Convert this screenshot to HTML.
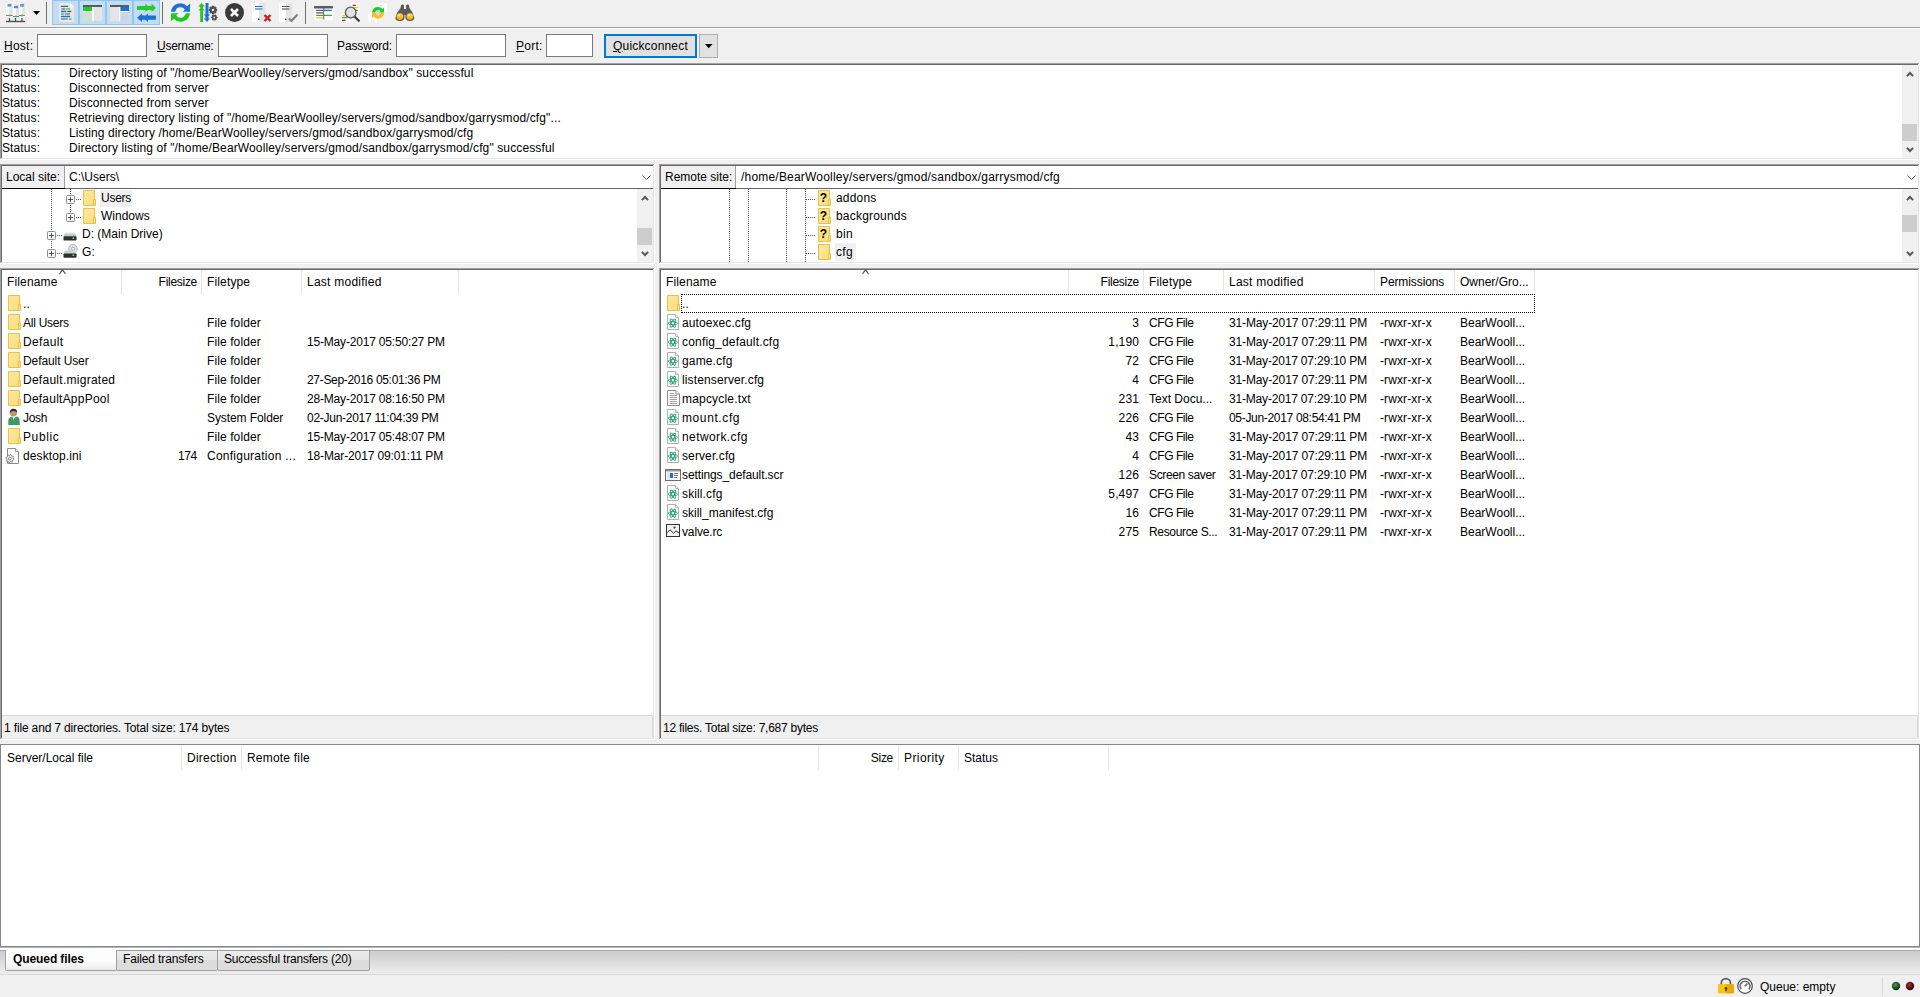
<!DOCTYPE html><html><head><meta charset="utf-8"><style>
html,body{margin:0;padding:0;width:1920px;height:997px;overflow:hidden;background:#f0f0f0;}
body{position:relative;font-family:"Liberation Sans",sans-serif;font-size:12px;color:#000;}
div{box-sizing:border-box;}
.t{position:absolute;white-space:nowrap;line-height:16px;height:16px;letter-spacing:0.12px;}
.d{letter-spacing:-0.25px;}
svg{position:absolute;overflow:visible;}
</style></head><body>
<div style="position:absolute;left:0px;top:27px;width:1920px;height:1px;background:#a0a0a0;"></div>
<div style="position:absolute;left:0px;top:28px;width:1920px;height:1px;background:#fff;"></div>
<div style="position:absolute;left:52px;top:0px;width:27px;height:25px;background:#c4dcf2;border:1px solid #8ec6f4;"></div>
<div style="position:absolute;left:79px;top:0px;width:27px;height:25px;background:#c4dcf2;border:1px solid #8ec6f4;"></div>
<div style="position:absolute;left:106px;top:0px;width:27px;height:25px;background:#c4dcf2;border:1px solid #8ec6f4;"></div>
<div style="position:absolute;left:133px;top:0px;width:27px;height:25px;background:#c4dcf2;border:1px solid #8ec6f4;"></div>
<div style="position:absolute;left:46px;top:2px;width:1px;height:22px;background:#6d6d6d;"></div>
<div style="position:absolute;left:162px;top:2px;width:1px;height:22px;background:#6d6d6d;"></div>
<div style="position:absolute;left:305px;top:2px;width:1px;height:22px;background:#6d6d6d;"></div>
<svg style="left:0;top:0" width="420" height="27" viewBox="0 0 420 27"><defs>
<linearGradient id="srvg" x1="0" x2="1"><stop offset="0" stop-color="#fff"/><stop offset="0.5" stop-color="#fafafa"/><stop offset="0.52" stop-color="#e6e6e6"/><stop offset="1" stop-color="#e0e0e0"/></linearGradient>
<linearGradient id="lensg" x1="0" y1="0" x2="0" y2="1"><stop offset="0" stop-color="#ffd23a"/><stop offset="1" stop-color="#f0b000"/></linearGradient>
</defs><rect x="6" y="3" width="6" height="12" fill="url(#srvg)"/><rect x="13" y="5" width="6" height="11" fill="url(#srvg)"/><rect x="19" y="3" width="6" height="12" fill="url(#srvg)"/><rect x="7.5" y="4" width="4" height="2.6" fill="#5b9be0"/><rect x="14" y="5.8" width="4" height="2.4" fill="#4a8ad8"/><rect x="20" y="4" width="4" height="2.6" fill="#5b9be0"/><path d="M6 15.5H12.5M13 16.5H19M19 15.5H25" stroke="#808080" stroke-width="1"/><rect x="8.7" y="14.7" width="1.8" height="1.6" fill="#2ecc40"/><rect x="14.9" y="15.7" width="2" height="1.6" fill="#2ecc40"/><rect x="21" y="14.7" width="2" height="1.6" fill="#2ecc40"/><path d="M9.5 18V21.5M15.5 18V21.5M22 18V21.5" stroke="#505050" stroke-width="1.3"/><path d="M6 21.5H25" stroke="#505050" stroke-width="1.4"/><path d="M33 11H40L36.5 15Z" fill="#000"/><path d="M59 3H70L74 7V22H59Z" fill="#e8e8e8"/><path d="M70 3L74 7H70Z" fill="#fff"/><g stroke-width="1.3" stroke-linecap="round"><path d="M61.5 6.4H67.5" stroke="#555"/><path d="M61.8 9H64.8" stroke="#4a8ad8"/><path d="M66.5 9H69.5" stroke="#4ccc50"/><path d="M61.5 11.5H65.8" stroke="#1a73d4"/><path d="M67.8 11.5H70.8" stroke="#555"/><path d="M61.5 14H63.6" stroke="#4ccc50"/><path d="M65.5 14H69.5" stroke="#888"/><path d="M61.5 16.5H69.8" stroke="#1a73d4"/><path d="M61.5 19H67.3" stroke="#888"/><path d="M69.2 19H71.2" stroke="#4ccc50"/></g><rect x="83" y="5" width="19" height="2" fill="#5a5a5a"/><rect x="83" y="7" width="9" height="4" fill="#22cc22"/><rect x="83" y="11" width="9" height="1" fill="#fff"/><rect x="83" y="12" width="9" height="9" fill="#cfe3c9"/><rect x="92" y="7" width="2" height="14" fill="#f8f8f8"/><rect x="94" y="7" width="8" height="14" fill="#e4e4e4"/><rect x="110" y="5" width="19" height="2" fill="#5a5a5a"/><rect x="110" y="7" width="9" height="14" fill="#e4e4e4"/><rect x="119" y="7" width="1.5" height="14" fill="#f8f8f8"/><rect x="120.5" y="7" width="8.5" height="4" fill="#1a73d4"/><rect x="120.5" y="11" width="8.5" height="1" fill="#fff"/><rect x="120.5" y="12" width="8.5" height="9" fill="#c8d8e6"/><path d="M137 6H145.5V3.5L150 8L145.5 12V10H137Z" fill="#22cc22"/><path d="M150 6H151.5V3.5L156 8L151.5 12V10H150Z" fill="#22cc22"/><rect x="146" y="6" width="5" height="4" fill="#22cc22"/><path d="M156 15.5H148V13.5L143 17.8L148 22V19.7H156Z" fill="#1a73d4"/><path d="M143.5 15.5H142V13.5L137 17.8L142 22V19.7H143.5Z" fill="#1a73d4"/><rect x="142" y="15.5" width="6" height="4.2" fill="#1a73d4"/><g transform="translate(171,3)"><path d="M0,8.7 A9.4,9.4 0 0 1 16.2,3.2 L19,0.5 V8.7 H11.8 L13.8,6.6 A5.2,5.2 0 0 0 4.3,8.7 Z" fill="#1a73d4"/><path d="M19,10.3 A9.4,9.4 0 0 1 2.8,15.8 L0,18.5 V10.3 H7.2 L5.2,12.4 A5.2,5.2 0 0 0 14.7,10.3 Z" fill="#22c822"/></g><path d="M200.2 22V10.5L198.2 10.5L200.2 8.5V6.5L198.2 6.5L201.6 3L205 6.5L203 6.5V8.5L205 10.5L203 10.5V22Z" fill="#22c822"/><path d="M205.5 3H208.5V14.5L210 14.5L208.5 16.5V18.5L210 18.5L207 22L203.8 18.5L205.5 18.5V16.5L203.8 14.5L205.5 14.5Z" fill="#1a73d4"/><polygon points="217.20,10.00 215.77,11.15 215.97,12.97 214.15,12.77 213.00,14.20 211.85,12.77 210.03,12.97 210.23,11.15 208.80,10.00 210.23,8.85 210.03,7.03 211.85,7.23 213.00,5.80 214.15,7.23 215.97,7.03 215.77,8.85" fill="#4a4a4a" stroke="#4a4a4a" stroke-width="1" stroke-linejoin="round"/><circle cx="213" cy="10" r="1.2" fill="#f0f0f0"/><polygon points="217.30,17.50 216.21,18.60 215.80,20.10 214.30,19.70 212.80,20.10 212.39,18.60 211.30,17.50 212.39,16.40 212.80,14.90 214.30,15.30 215.80,14.90 216.21,16.40" fill="#4a4a4a" stroke="#4a4a4a" stroke-width="1" stroke-linejoin="round"/><circle cx="214.3" cy="17.5" r="0.9" fill="#f0f0f0"/><circle cx="234.5" cy="12.5" r="9.5" fill="#3a3a3a"/><path d="M231 9L238 16M238 9L231 16" stroke="#fff" stroke-width="2.6"/><rect x="252" y="3" width="7" height="19" fill="#fff"/><rect x="259" y="3" width="6.5" height="19" fill="#e4e4e4"/><path d="M255 6.5H262.5" stroke="#1a73d4" stroke-width="1"/><path d="M255 9H262.5" stroke="#5b9be0" stroke-width="1.6"/><rect x="258" y="18.5" width="1.4" height="1.4" fill="#333"/><path d="M264.5 15L270.5 21M270.5 15L264.5 21" stroke="#c81e1e" stroke-width="2.4"/><rect x="279" y="3" width="7" height="19" fill="#fff"/><rect x="286" y="3" width="6.5" height="19" fill="#e4e4e4"/><path d="M282 6.5H289.5" stroke="#555" stroke-width="1"/><path d="M282 9H289.5" stroke="#888" stroke-width="1.6"/><rect x="285" y="18.5" width="1.4" height="1.4" fill="#333"/><path d="M289 18.5L291.5 21L297.5 14.5" stroke="#808080" stroke-width="2.2" fill="none"/><rect x="314" y="8.5" width="19" height="11.5" fill="#fff"/><rect x="314" y="6" width="19" height="2.5" fill="#5a5a5a" rx="0.8"/><g stroke-width="1.3" stroke-linecap="round"><path d="M316.5 10.3H331.5" stroke="#1a73d4"/><path d="M316.5 12.8H322.8" stroke="#c83232"/><path d="M316.5 15.3H331.5" stroke="#22b822"/><path d="M316.5 17.8H322.8" stroke="#ffc21a"/></g><path d="M323.7 8V19.5" stroke="#666" stroke-width="1"/><rect x="351.5" y="3" width="8" height="9" fill="#fff"/><rect x="341" y="14" width="9" height="8" fill="#fff"/><g stroke-width="1.3" stroke-linecap="round"><path d="M353 5.3H355.5" stroke="#c81e1e"/><path d="M353.5 7.6H358" stroke="#ffc21a"/><path d="M355 10.3H357.5" stroke="#22b822"/><path d="M342.5 15.3H344.5" stroke="#ffc21a"/><path d="M342.5 17.6H347" stroke="#22b822"/><path d="M342.5 20.4H345" stroke="#c81e1e"/></g><path d="M354.5 16.5L358.8 20.8" stroke="#3a3a3a" stroke-width="2.3" stroke-linecap="round"/><circle cx="350.7" cy="12.5" r="5.3" fill="#e2e2e2" stroke="#5a5a5a" stroke-width="1.3"/><rect x="378.5" y="3" width="8.5" height="9" fill="#fff"/><rect x="368" y="13.5" width="9" height="8.5" fill="#fff"/><path d="M379.5 5.5H382" stroke="#ccc" stroke-width="0.8"/><path d="M371 21H374" stroke="#ccc" stroke-width="0.8"/><circle cx="378" cy="12.8" r="4" fill="#d8d8d8"/><g transform="translate(372,6.7)"><path d="M0,5.8 A6,6 0 0 1 10.5,2.3 L12,0.8 V5.8 H7.2 L8.5,4.5 A3.2,3.2 0 0 0 3,5.8 Z" fill="#22c822"/><path d="M12,6.4 A6,6 0 0 1 1.5,9.9 L0,11.4 V6.4 H4.8 L3.5,7.7 A3.2,3.2 0 0 0 9,6.4 Z" fill="#ffbf10"/></g><path d="M401 5Q402.5 4 404 5V9H406V5Q407.5 4 409 5L409.5 8L412.5 12.5L414.2 17.5Q414.5 21 409.8 21Q406 21 405.5 18V15H404.5V18Q404 21 400 21Q395.2 21 395.5 17.5L397.2 12.5L400.5 8Z" fill="#5c5c5c"/><circle cx="399.9" cy="16.6" r="3.3" fill="url(#lensg)"/><circle cx="409.9" cy="16.6" r="3.3" fill="url(#lensg)"/><path d="M398.4 16.2Q398.6 14.9 399.9 14.7M408.4 16.2Q408.6 14.9 409.9 14.7" stroke="#fff" stroke-width="0.8" fill="none"/></svg>
<div class="t" style="left:4px;top:38px;letter-spacing:0.250px;"><u>H</u>ost:</div>
<div style="position:absolute;left:37px;top:34px;width:110px;height:23px;background:#fff;border:1px solid #7a7a7a;"></div>
<div class="t" style="left:157px;top:38px;letter-spacing:-0.250px;"><u>U</u>sername:</div>
<div style="position:absolute;left:218px;top:34px;width:110px;height:23px;background:#fff;border:1px solid #7a7a7a;"></div>
<div class="t" style="left:337px;top:38px;letter-spacing:-0.125px;">Pass<u>w</u>ord:</div>
<div style="position:absolute;left:396px;top:34px;width:110px;height:23px;background:#fff;border:1px solid #7a7a7a;"></div>
<div class="t" style="left:516px;top:38px;letter-spacing:0.250px;"><u>P</u>ort:</div>
<div style="position:absolute;left:546px;top:34px;width:47px;height:23px;background:#fff;border:1px solid #7a7a7a;"></div>
<div style="position:absolute;left:604px;top:34px;width:93px;height:24px;background:#e1e1e1;border:2px solid #0078d7;"></div>
<div class="t" style="left:613px;top:38px;letter-spacing:0.182px;"><u>Q</u>uickconnect</div>
<div style="position:absolute;left:699px;top:34px;width:19px;height:24px;background:#e1e1e1;border:1px solid #adadad;"></div>
<svg style="left:705px;top:44px" width="8" height="5"><path d="M0 0H7.5L3.75 4.2z" fill="#000"/></svg>
<div style="position:absolute;left:0px;top:63px;width:1920px;height:97px;background:#fff;"></div><div style="position:absolute;left:0px;top:63px;width:1919px;height:96px;background:#a0a0a0;"></div><div style="position:absolute;left:1px;top:64px;width:1918px;height:95px;background:#e3e3e3;"></div><div style="position:absolute;left:1px;top:64px;width:1917px;height:94px;background:#696969;"></div><div style="position:absolute;left:2px;top:65px;width:1916px;height:93px;background:#fff;"></div>
<div class="t" style="left:2px;top:65px;">Status:</div>
<div class="t" style="left:69px;top:65px;">Directory listing of &quot;/home/BearWoolley/servers/gmod/sandbox&quot; successful</div>
<div class="t" style="left:2px;top:80px;">Status:</div>
<div class="t" style="left:69px;top:80px;">Disconnected from server</div>
<div class="t" style="left:2px;top:95px;">Status:</div>
<div class="t" style="left:69px;top:95px;">Disconnected from server</div>
<div class="t" style="left:2px;top:110px;">Status:</div>
<div class="t" style="left:69px;top:110px;">Retrieving directory listing of &quot;/home/BearWoolley/servers/gmod/sandbox/garrysmod/cfg&quot;...</div>
<div class="t" style="left:2px;top:125px;">Status:</div>
<div class="t" style="left:69px;top:125px;">Listing directory /home/BearWoolley/servers/gmod/sandbox/garrysmod/cfg</div>
<div class="t" style="left:2px;top:140px;">Status:</div>
<div class="t" style="left:69px;top:140px;">Directory listing of &quot;/home/BearWoolley/servers/gmod/sandbox/garrysmod/cfg&quot; successful</div>
<div style="position:absolute;left:1902px;top:65px;width:16px;height:93px;background:#f0f0f0;"></div><svg style="left:1906px;top:71px" width="8" height="6"><path d="M0.9 5.1L4 2L7.1 5.1" stroke="#555" stroke-width="2" fill="none"/></svg><svg style="left:1906px;top:147px" width="8" height="6"><path d="M0.9 0.9L4 4L7.1 0.9" stroke="#555" stroke-width="2" fill="none"/></svg><div style="position:absolute;left:1902px;top:124px;width:15px;height:17px;background:#cdcdcd;"></div>
<div style="position:absolute;left:0px;top:164px;width:655px;height:100px;background:#fff;"></div><div style="position:absolute;left:0px;top:164px;width:654px;height:99px;background:#a0a0a0;"></div><div style="position:absolute;left:1px;top:165px;width:653px;height:98px;background:#e3e3e3;"></div><div style="position:absolute;left:1px;top:165px;width:652px;height:97px;background:#696969;"></div><div style="position:absolute;left:2px;top:166px;width:651px;height:96px;background:#fff;"></div>
<div style="position:absolute;left:659px;top:164px;width:1261px;height:100px;background:#fff;"></div><div style="position:absolute;left:659px;top:164px;width:1260px;height:99px;background:#a0a0a0;"></div><div style="position:absolute;left:660px;top:165px;width:1259px;height:98px;background:#e3e3e3;"></div><div style="position:absolute;left:660px;top:165px;width:1258px;height:97px;background:#696969;"></div><div style="position:absolute;left:661px;top:166px;width:1257px;height:96px;background:#fff;"></div>
<div style="position:absolute;left:2px;top:166px;width:63px;height:22px;background:#f0f0f0;border-right:1px solid #a0a0a0;"></div><div style="position:absolute;left:2px;top:188px;width:651px;height:1px;background:#646464;"></div><div style="position:absolute;left:2px;top:188px;width:63px;height:1px;background:#000;"></div><div class="t" style="left:6px;top:169px;letter-spacing:0.000px;">Local site:</div><div class="t" style="left:69px;top:169px;letter-spacing:0.000px;">C:\Users\</div><svg style="left:642px;top:175px" width="9" height="6"><path d="M0.5 0.5L4.5 4.5L8.5 0.5" stroke="#606060" stroke-width="1" fill="none"/></svg>
<div style="position:absolute;left:661px;top:166px;width:75px;height:22px;background:#f0f0f0;border-right:1px solid #a0a0a0;"></div><div style="position:absolute;left:661px;top:188px;width:1257px;height:1px;background:#646464;"></div><div style="position:absolute;left:661px;top:188px;width:75px;height:1px;background:#000;"></div><div class="t" style="left:665px;top:169px;letter-spacing:0.000px;">Remote site:</div><div class="t" style="left:741px;top:169px;letter-spacing:0.200px;">/home/BearWoolley/servers/gmod/sandbox/garrysmod/cfg</div><svg style="left:1907px;top:175px" width="9" height="6"><path d="M0.5 0.5L4.5 4.5L8.5 0.5" stroke="#606060" stroke-width="1" fill="none"/></svg>
<div style="position:absolute;left:637px;top:189px;width:16px;height:73px;background:#f0f0f0;"></div><svg style="left:641px;top:195px" width="8" height="6"><path d="M0.9 5.1L4 2L7.1 5.1" stroke="#555" stroke-width="2" fill="none"/></svg><svg style="left:641px;top:251px" width="8" height="6"><path d="M0.9 0.9L4 4L7.1 0.9" stroke="#555" stroke-width="2" fill="none"/></svg><div style="position:absolute;left:637px;top:228px;width:15px;height:17px;background:#cdcdcd;"></div>
<div style="position:absolute;left:1902px;top:189px;width:16px;height:73px;background:#f0f0f0;"></div><svg style="left:1906px;top:195px" width="8" height="6"><path d="M0.9 5.1L4 2L7.1 5.1" stroke="#555" stroke-width="2" fill="none"/></svg><svg style="left:1906px;top:251px" width="8" height="6"><path d="M0.9 0.9L4 4L7.1 0.9" stroke="#555" stroke-width="2" fill="none"/></svg><div style="position:absolute;left:1902px;top:215px;width:15px;height:17px;background:#cdcdcd;"></div>
<div style="position:absolute;left:51px;top:189px;width:1px;height:60px;background:repeating-linear-gradient(to bottom,#5a5a5a 0,#5a5a5a 1px,transparent 1px,transparent 2px);"></div>
<div style="position:absolute;left:70px;top:189px;width:1px;height:24px;background:repeating-linear-gradient(to bottom,#5a5a5a 0,#5a5a5a 1px,transparent 1px,transparent 2px);"></div>
<div style="position:absolute;left:66px;top:195px;width:9px;height:9px;background:linear-gradient(to bottom,#fff 0,#fff 55%,#ececec 100%);border:1px solid #8e8e8e;border-radius:1.5px;"></div><div style="position:absolute;left:68px;top:199px;width:5px;height:1px;background:#3c4e86;"></div><div style="position:absolute;left:70px;top:197px;width:1px;height:5px;background:#3c4e86;"></div>
<div style="position:absolute;left:76px;top:199px;width:6px;height:1px;background:repeating-linear-gradient(to right,#5a5a5a 0,#5a5a5a 1px,transparent 1px,transparent 2px);"></div>
<svg style="left:83px;top:190px" width="13" height="16" viewBox="0 0 13 16"><defs><linearGradient id="fg" x1="0" y1="0" x2="1" y2="1"><stop offset="0" stop-color="#fee9a0"/><stop offset="1" stop-color="#fbdc7a"/></linearGradient></defs><path d="M0.5 0.5H11.5V15.5H0.5Z" fill="url(#fg)" stroke="#e8c04a"/><path d="M10.5 9.5H12.5V15.5H10.5Z" fill="#fbe08a" stroke="#e8c04a"/></svg>
<div style="position:absolute;left:100px;top:190px;width:32px;height:17px;background:#f0f0f0;"></div>
<div class="t" style="left:101px;top:190px;letter-spacing:-0.250px;">Users</div>
<div style="position:absolute;left:66px;top:213px;width:9px;height:9px;background:linear-gradient(to bottom,#fff 0,#fff 55%,#ececec 100%);border:1px solid #8e8e8e;border-radius:1.5px;"></div><div style="position:absolute;left:68px;top:217px;width:5px;height:1px;background:#3c4e86;"></div><div style="position:absolute;left:70px;top:215px;width:1px;height:5px;background:#3c4e86;"></div>
<div style="position:absolute;left:76px;top:217px;width:6px;height:1px;background:repeating-linear-gradient(to right,#5a5a5a 0,#5a5a5a 1px,transparent 1px,transparent 2px);"></div>
<svg style="left:83px;top:208px" width="13" height="16" viewBox="0 0 13 16"><defs><linearGradient id="fg" x1="0" y1="0" x2="1" y2="1"><stop offset="0" stop-color="#fee9a0"/><stop offset="1" stop-color="#fbdc7a"/></linearGradient></defs><path d="M0.5 0.5H11.5V15.5H0.5Z" fill="url(#fg)" stroke="#e8c04a"/><path d="M10.5 9.5H12.5V15.5H10.5Z" fill="#fbe08a" stroke="#e8c04a"/></svg>
<div class="t" style="left:101px;top:208px;letter-spacing:0.000px;">Windows</div>
<div style="position:absolute;left:47px;top:231px;width:9px;height:9px;background:linear-gradient(to bottom,#fff 0,#fff 55%,#ececec 100%);border:1px solid #8e8e8e;border-radius:1.5px;"></div><div style="position:absolute;left:49px;top:235px;width:5px;height:1px;background:#3c4e86;"></div><div style="position:absolute;left:51px;top:233px;width:1px;height:5px;background:#3c4e86;"></div>
<div style="position:absolute;left:57px;top:235px;width:6px;height:1px;background:repeating-linear-gradient(to right,#5a5a5a 0,#5a5a5a 1px,transparent 1px,transparent 2px);"></div>
<svg style="left:63px;top:232px" width="14" height="9"><defs><linearGradient id="drg" x1="0" y1="0" x2="0" y2="1"><stop offset="0" stop-color="#e4e6e8"/><stop offset="1" stop-color="#b8bcc0"/></linearGradient></defs><path d="M2 0.5H12L13.5 4.3H0.5Z" fill="url(#drg)"/><rect x="0.5" y="4.3" width="13" height="4.2" rx="0.8" fill="#2e2e2e"/><circle cx="10.3" cy="6.2" r="0.9" fill="#3f3"/></svg>
<div class="t" style="left:82px;top:226px;letter-spacing:0.000px;">D: (Main Drive)</div>
<div style="position:absolute;left:47px;top:249px;width:9px;height:9px;background:linear-gradient(to bottom,#fff 0,#fff 55%,#ececec 100%);border:1px solid #8e8e8e;border-radius:1.5px;"></div><div style="position:absolute;left:49px;top:253px;width:5px;height:1px;background:#3c4e86;"></div><div style="position:absolute;left:51px;top:251px;width:1px;height:5px;background:#3c4e86;"></div>
<div style="position:absolute;left:57px;top:253px;width:6px;height:1px;background:repeating-linear-gradient(to right,#5a5a5a 0,#5a5a5a 1px,transparent 1px,transparent 2px);"></div>
<svg style="left:63px;top:244px" width="14" height="14"><circle cx="10" cy="4.7" r="4.3" fill="#dfe3e6" stroke="#a0a4a8" stroke-width="0.8"/><circle cx="10" cy="4.7" r="1.5" fill="#fff" stroke="#999" stroke-width="0.8"/><path d="M2 6.5H8.5L13.5 10H0.5Z" fill="#c8ccd0"/><rect x="0.5" y="9.5" width="13" height="4.2" rx="0.8" fill="#2e2e2e"/><circle cx="10.3" cy="11.2" r="0.9" fill="#3f3"/></svg>
<div class="t" style="left:82px;top:244px;">G:</div>
<div style="position:absolute;left:729px;top:189px;width:1px;height:73px;background:repeating-linear-gradient(to bottom,#5a5a5a 0,#5a5a5a 1px,transparent 1px,transparent 2px);"></div>
<div style="position:absolute;left:748px;top:189px;width:1px;height:73px;background:repeating-linear-gradient(to bottom,#5a5a5a 0,#5a5a5a 1px,transparent 1px,transparent 2px);"></div>
<div style="position:absolute;left:786px;top:189px;width:1px;height:73px;background:repeating-linear-gradient(to bottom,#5a5a5a 0,#5a5a5a 1px,transparent 1px,transparent 2px);"></div>
<div style="position:absolute;left:805px;top:189px;width:1px;height:73px;background:repeating-linear-gradient(to bottom,#5a5a5a 0,#5a5a5a 1px,transparent 1px,transparent 2px);"></div>
<div style="position:absolute;left:806px;top:199px;width:10px;height:1px;background:repeating-linear-gradient(to right,#5a5a5a 0,#5a5a5a 1px,transparent 1px,transparent 2px);"></div>
<svg style="left:818px;top:190px" width="13" height="16" viewBox="0 0 13 16"><defs><linearGradient id="fg" x1="0" y1="0" x2="1" y2="1"><stop offset="0" stop-color="#fee9a0"/><stop offset="1" stop-color="#fbdc7a"/></linearGradient></defs><path d="M0.5 0.5H11.5V15.5H0.5Z" fill="url(#fg)" stroke="#e8c04a"/><path d="M10.5 9.5H12.5V15.5H10.5Z" fill="#fbe08a" stroke="#e8c04a"/><text x="5.5" y="12" font-family="Liberation Sans" font-weight="bold" font-size="12" text-anchor="middle" fill="#000">?</text></svg>
<div class="t" style="left:836px;top:190px;letter-spacing:0.200px;">addons</div>
<div style="position:absolute;left:806px;top:217px;width:10px;height:1px;background:repeating-linear-gradient(to right,#5a5a5a 0,#5a5a5a 1px,transparent 1px,transparent 2px);"></div>
<svg style="left:818px;top:208px" width="13" height="16" viewBox="0 0 13 16"><defs><linearGradient id="fg" x1="0" y1="0" x2="1" y2="1"><stop offset="0" stop-color="#fee9a0"/><stop offset="1" stop-color="#fbdc7a"/></linearGradient></defs><path d="M0.5 0.5H11.5V15.5H0.5Z" fill="url(#fg)" stroke="#e8c04a"/><path d="M10.5 9.5H12.5V15.5H10.5Z" fill="#fbe08a" stroke="#e8c04a"/><text x="5.5" y="12" font-family="Liberation Sans" font-weight="bold" font-size="12" text-anchor="middle" fill="#000">?</text></svg>
<div class="t" style="left:836px;top:208px;letter-spacing:0.200px;">backgrounds</div>
<div style="position:absolute;left:806px;top:235px;width:10px;height:1px;background:repeating-linear-gradient(to right,#5a5a5a 0,#5a5a5a 1px,transparent 1px,transparent 2px);"></div>
<svg style="left:818px;top:226px" width="13" height="16" viewBox="0 0 13 16"><defs><linearGradient id="fg" x1="0" y1="0" x2="1" y2="1"><stop offset="0" stop-color="#fee9a0"/><stop offset="1" stop-color="#fbdc7a"/></linearGradient></defs><path d="M0.5 0.5H11.5V15.5H0.5Z" fill="url(#fg)" stroke="#e8c04a"/><path d="M10.5 9.5H12.5V15.5H10.5Z" fill="#fbe08a" stroke="#e8c04a"/><text x="5.5" y="12" font-family="Liberation Sans" font-weight="bold" font-size="12" text-anchor="middle" fill="#000">?</text></svg>
<div class="t" style="left:836px;top:226px;letter-spacing:0.300px;">bin</div>
<div style="position:absolute;left:806px;top:253px;width:10px;height:1px;background:repeating-linear-gradient(to right,#5a5a5a 0,#5a5a5a 1px,transparent 1px,transparent 2px);"></div>
<svg style="left:818px;top:244px" width="13" height="16" viewBox="0 0 13 16"><defs><linearGradient id="fg" x1="0" y1="0" x2="1" y2="1"><stop offset="0" stop-color="#fee9a0"/><stop offset="1" stop-color="#fbdc7a"/></linearGradient></defs><path d="M0.5 0.5H11.5V15.5H0.5Z" fill="url(#fg)" stroke="#e8c04a"/><path d="M10.5 9.5H12.5V15.5H10.5Z" fill="#fbe08a" stroke="#e8c04a"/></svg>
<div style="position:absolute;left:835px;top:243px;width:21px;height:18px;background:#f0f0f0;"></div>
<div class="t" style="left:836px;top:244px;letter-spacing:0.300px;">cfg</div>
<div style="position:absolute;left:0px;top:268px;width:655px;height:472px;background:#fff;"></div><div style="position:absolute;left:0px;top:268px;width:654px;height:471px;background:#a0a0a0;"></div><div style="position:absolute;left:1px;top:269px;width:653px;height:470px;background:#e3e3e3;"></div><div style="position:absolute;left:1px;top:269px;width:652px;height:469px;background:#696969;"></div><div style="position:absolute;left:2px;top:270px;width:651px;height:468px;background:#fff;"></div>
<div style="position:absolute;left:659px;top:268px;width:1261px;height:472px;background:#fff;"></div><div style="position:absolute;left:659px;top:268px;width:1260px;height:471px;background:#a0a0a0;"></div><div style="position:absolute;left:660px;top:269px;width:1259px;height:470px;background:#e3e3e3;"></div><div style="position:absolute;left:660px;top:269px;width:1258px;height:469px;background:#696969;"></div><div style="position:absolute;left:661px;top:270px;width:1257px;height:468px;background:#fff;"></div>
<div style="position:absolute;left:121px;top:270px;width:1px;height:24px;background:#e5e5e5;"></div>
<div style="position:absolute;left:201px;top:270px;width:1px;height:24px;background:#e5e5e5;"></div>
<div style="position:absolute;left:301px;top:270px;width:1px;height:24px;background:#e5e5e5;"></div>
<div style="position:absolute;left:458px;top:270px;width:1px;height:24px;background:#e5e5e5;"></div>
<svg style="left:58px;top:269px" width="9" height="7"><path d="M1.5 4.8L4.5 0.9L7.5 4.8" stroke="#606060" stroke-width="1.3" fill="none"/></svg>
<div class="t" style="left:7px;top:274px;letter-spacing:0.143px;">Filename</div>
<div class="t" style="right:1723px;top:274px;letter-spacing:-0.286px;">Filesize</div>
<div class="t" style="left:207px;top:274px;letter-spacing:0.143px;">Filetype</div>
<div class="t" style="left:307px;top:274px;letter-spacing:0.250px;">Last modified</div>
<svg style="left:8px;top:295px" width="13" height="16" viewBox="0 0 13 16"><defs><linearGradient id="fg" x1="0" y1="0" x2="1" y2="1"><stop offset="0" stop-color="#fee9a0"/><stop offset="1" stop-color="#fbdc7a"/></linearGradient></defs><path d="M0.5 0.5H11.5V15.5H0.5Z" fill="url(#fg)" stroke="#e8c04a"/><path d="M10.5 9.5H12.5V15.5H10.5Z" fill="#fbe08a" stroke="#e8c04a"/></svg>
<div class="t" style="left:23px;top:296px;">..</div>
<svg style="left:8px;top:314px" width="13" height="16" viewBox="0 0 13 16"><defs><linearGradient id="fg" x1="0" y1="0" x2="1" y2="1"><stop offset="0" stop-color="#fee9a0"/><stop offset="1" stop-color="#fbdc7a"/></linearGradient></defs><path d="M0.5 0.5H11.5V15.5H0.5Z" fill="url(#fg)" stroke="#e8c04a"/><path d="M10.5 9.5H12.5V15.5H10.5Z" fill="#fbe08a" stroke="#e8c04a"/></svg>
<div class="t" style="left:23px;top:315px;letter-spacing:-0.250px;">All Users</div>
<div class="t" style="left:207px;top:315px;letter-spacing:0.100px;">File folder</div>
<svg style="left:8px;top:333px" width="13" height="16" viewBox="0 0 13 16"><defs><linearGradient id="fg" x1="0" y1="0" x2="1" y2="1"><stop offset="0" stop-color="#fee9a0"/><stop offset="1" stop-color="#fbdc7a"/></linearGradient></defs><path d="M0.5 0.5H11.5V15.5H0.5Z" fill="url(#fg)" stroke="#e8c04a"/><path d="M10.5 9.5H12.5V15.5H10.5Z" fill="#fbe08a" stroke="#e8c04a"/></svg>
<div class="t" style="left:23px;top:334px;letter-spacing:0.333px;">Default</div>
<div class="t" style="left:207px;top:334px;letter-spacing:0.100px;">File folder</div>
<div class="t" style="left:307px;top:334px;letter-spacing:-0.182px;">15-May-2017 05:50:27 PM</div>
<svg style="left:8px;top:352px" width="13" height="16" viewBox="0 0 13 16"><defs><linearGradient id="fg" x1="0" y1="0" x2="1" y2="1"><stop offset="0" stop-color="#fee9a0"/><stop offset="1" stop-color="#fbdc7a"/></linearGradient></defs><path d="M0.5 0.5H11.5V15.5H0.5Z" fill="url(#fg)" stroke="#e8c04a"/><path d="M10.5 9.5H12.5V15.5H10.5Z" fill="#fbe08a" stroke="#e8c04a"/></svg>
<div class="t" style="left:23px;top:353px;letter-spacing:-0.091px;">Default User</div>
<div class="t" style="left:207px;top:353px;letter-spacing:0.100px;">File folder</div>
<svg style="left:8px;top:371px" width="13" height="16" viewBox="0 0 13 16"><defs><linearGradient id="fg" x1="0" y1="0" x2="1" y2="1"><stop offset="0" stop-color="#fee9a0"/><stop offset="1" stop-color="#fbdc7a"/></linearGradient></defs><path d="M0.5 0.5H11.5V15.5H0.5Z" fill="url(#fg)" stroke="#e8c04a"/><path d="M10.5 9.5H12.5V15.5H10.5Z" fill="#fbe08a" stroke="#e8c04a"/></svg>
<div class="t" style="left:23px;top:372px;letter-spacing:0.267px;">Default.migrated</div>
<div class="t" style="left:207px;top:372px;letter-spacing:0.100px;">File folder</div>
<div class="t" style="left:307px;top:372px;letter-spacing:-0.318px;">27-Sep-2016 05:01:36 PM</div>
<svg style="left:8px;top:390px" width="13" height="16" viewBox="0 0 13 16"><defs><linearGradient id="fg" x1="0" y1="0" x2="1" y2="1"><stop offset="0" stop-color="#fee9a0"/><stop offset="1" stop-color="#fbdc7a"/></linearGradient></defs><path d="M0.5 0.5H11.5V15.5H0.5Z" fill="url(#fg)" stroke="#e8c04a"/><path d="M10.5 9.5H12.5V15.5H10.5Z" fill="#fbe08a" stroke="#e8c04a"/></svg>
<div class="t" style="left:23px;top:391px;letter-spacing:0.231px;">DefaultAppPool</div>
<div class="t" style="left:207px;top:391px;letter-spacing:0.100px;">File folder</div>
<div class="t" style="left:307px;top:391px;letter-spacing:-0.182px;">28-May-2017 08:16:50 PM</div>
<svg style="left:8px;top:408px" width="13" height="18" viewBox="0 0 13 18"><path d="M0.3 17V12.8Q0.4 9.2 4 8.4L6.5 9.6L9 8.4Q11.8 9.5 11.6 13L11.9 17Z" fill="#3d9962"/><path d="M4.3 8.6L5.5 12L6.9 8.7Z" fill="#e6f2f2"/><circle cx="5.4" cy="4.9" r="3.5" fill="#c39472"/><path d="M1.8 5.2Q1.5 0.9 5.5 0.8Q9.4 0.8 9 4.7Q7.9 2.9 5.2 3.1Q3 3.1 1.8 5.2Z" fill="#2e2a28"/></svg>
<div class="t" style="left:23px;top:410px;letter-spacing:-0.300px;">Josh</div>
<div class="t" style="left:207px;top:410px;letter-spacing:-0.083px;">System Folder</div>
<div class="t" style="left:307px;top:410px;letter-spacing:-0.273px;">02-Jun-2017 11:04:39 PM</div>
<svg style="left:8px;top:428px" width="13" height="16" viewBox="0 0 13 16"><defs><linearGradient id="fg" x1="0" y1="0" x2="1" y2="1"><stop offset="0" stop-color="#fee9a0"/><stop offset="1" stop-color="#fbdc7a"/></linearGradient></defs><path d="M0.5 0.5H11.5V15.5H0.5Z" fill="url(#fg)" stroke="#e8c04a"/><path d="M10.5 9.5H12.5V15.5H10.5Z" fill="#fbe08a" stroke="#e8c04a"/></svg>
<div class="t" style="left:23px;top:429px;letter-spacing:0.600px;">Public</div>
<div class="t" style="left:207px;top:429px;letter-spacing:0.100px;">File folder</div>
<div class="t" style="left:307px;top:429px;letter-spacing:-0.182px;">15-May-2017 05:48:07 PM</div>
<svg style="left:6px;top:448px" width="14" height="16" viewBox="0 0 14 16"><path d="M1.5 0.5H9.5L12.5 3.5V15.5H1.5Z" fill="#fff" stroke="#8a8a8a"/><path d="M9.5 0.5V3.5H12.5" fill="#eee" stroke="#9a9a9a"/><polygon points="8.12,11.44 6.48,12.32 6.29,14.18 4.50,13.64 3.06,14.82 2.18,13.18 0.32,12.99 0.86,11.20 -0.32,9.76 1.32,8.88 1.51,7.02 3.30,7.56 4.74,6.38 5.62,8.02 7.48,8.21 6.94,10.00" fill="#ececec" stroke="#7a7a7a" stroke-width="0.8" stroke-linejoin="round"/><circle cx="3.9" cy="10.6" r="1.4" fill="#fff" stroke="#7a7a7a" stroke-width="0.8"/></svg>
<div class="t" style="left:23px;top:448px;letter-spacing:0.100px;">desktop.ini</div>
<div class="t" style="right:1723px;top:448px;letter-spacing:-0.300px;">174</div>
<div class="t" style="left:207px;top:448px;letter-spacing:0.250px;">Configuration ...</div>
<div class="t" style="left:307px;top:448px;letter-spacing:-0.136px;">18-Mar-2017 09:01:11 PM</div>
<div style="position:absolute;left:1068px;top:270px;width:1px;height:24px;background:#e5e5e5;"></div>
<div style="position:absolute;left:1143px;top:270px;width:1px;height:24px;background:#e5e5e5;"></div>
<div style="position:absolute;left:1223px;top:270px;width:1px;height:24px;background:#e5e5e5;"></div>
<div style="position:absolute;left:1374px;top:270px;width:1px;height:24px;background:#e5e5e5;"></div>
<div style="position:absolute;left:1454px;top:270px;width:1px;height:24px;background:#e5e5e5;"></div>
<div style="position:absolute;left:1534px;top:270px;width:1px;height:24px;background:#e5e5e5;"></div>
<svg style="left:861px;top:269px" width="9" height="7"><path d="M1.5 4.8L4.5 0.9L7.5 4.8" stroke="#606060" stroke-width="1.3" fill="none"/></svg>
<div class="t" style="left:666px;top:274px;letter-spacing:0.143px;">Filename</div>
<div class="t" style="right:781px;top:274px;letter-spacing:-0.286px;">Filesize</div>
<div class="t" style="left:1149px;top:274px;letter-spacing:0.143px;">Filetype</div>
<div class="t" style="left:1229px;top:274px;letter-spacing:0.250px;">Last modified</div>
<div class="t" style="left:1380px;top:274px;letter-spacing:-0.100px;">Permissions</div>
<div class="t" style="left:1460px;top:274px;letter-spacing:0.000px;">Owner/Gro...</div>
<svg style="left:667px;top:295px" width="13" height="16" viewBox="0 0 13 16"><defs><linearGradient id="fg" x1="0" y1="0" x2="1" y2="1"><stop offset="0" stop-color="#fee9a0"/><stop offset="1" stop-color="#fbdc7a"/></linearGradient></defs><path d="M0.5 0.5H11.5V15.5H0.5Z" fill="url(#fg)" stroke="#e8c04a"/><path d="M10.5 9.5H12.5V15.5H10.5Z" fill="#fbe08a" stroke="#e8c04a"/></svg>
<div class="t" style="left:682px;top:296px;">..</div>
<svg style="left:667px;top:314px" width="13" height="16" viewBox="0 0 13 16"><path d="M0.5 0.5H8.5L11.5 3.5V15.5H0.5Z" fill="#fff" stroke="#b0b0b0"/><path d="M8.5 0.5V3.5H11.5" fill="#f0f0f0" stroke="#b8b8b8"/><g fill="none" stroke="#2aa574" stroke-width="0.95"><ellipse cx="5.9" cy="9.2" rx="4.6" ry="1.7"/><ellipse cx="5.9" cy="9.2" rx="4.6" ry="1.7" transform="rotate(60 5.9 9.2)"/><ellipse cx="5.9" cy="9.2" rx="4.6" ry="1.7" transform="rotate(120 5.9 9.2)"/></g></svg>
<div class="t" style="left:682px;top:315px;letter-spacing:0.091px;">autoexec.cfg</div>
<div class="t" style="right:781px;top:315px;">3</div>
<div class="t" style="left:1149px;top:315px;letter-spacing:-0.429px;">CFG File</div>
<div class="t" style="left:1229px;top:315px;letter-spacing:-0.136px;">31-May-2017 07:29:11 PM</div>
<div class="t" style="left:1380px;top:315px;letter-spacing:0.111px;">-rwxr-xr-x</div>
<div class="t" style="left:1460px;top:315px;letter-spacing:0.000px;">BearWooll...</div>
<svg style="left:667px;top:333px" width="13" height="16" viewBox="0 0 13 16"><path d="M0.5 0.5H8.5L11.5 3.5V15.5H0.5Z" fill="#fff" stroke="#b0b0b0"/><path d="M8.5 0.5V3.5H11.5" fill="#f0f0f0" stroke="#b8b8b8"/><g fill="none" stroke="#2aa574" stroke-width="0.95"><ellipse cx="5.9" cy="9.2" rx="4.6" ry="1.7"/><ellipse cx="5.9" cy="9.2" rx="4.6" ry="1.7" transform="rotate(60 5.9 9.2)"/><ellipse cx="5.9" cy="9.2" rx="4.6" ry="1.7" transform="rotate(120 5.9 9.2)"/></g></svg>
<div class="t" style="left:682px;top:334px;letter-spacing:0.176px;">config_default.cfg</div>
<div class="t" style="right:781px;top:334px;">1,190</div>
<div class="t" style="left:1149px;top:334px;letter-spacing:-0.429px;">CFG File</div>
<div class="t" style="left:1229px;top:334px;letter-spacing:-0.136px;">31-May-2017 07:29:11 PM</div>
<div class="t" style="left:1380px;top:334px;letter-spacing:0.111px;">-rwxr-xr-x</div>
<div class="t" style="left:1460px;top:334px;letter-spacing:0.000px;">BearWooll...</div>
<svg style="left:667px;top:352px" width="13" height="16" viewBox="0 0 13 16"><path d="M0.5 0.5H8.5L11.5 3.5V15.5H0.5Z" fill="#fff" stroke="#b0b0b0"/><path d="M8.5 0.5V3.5H11.5" fill="#f0f0f0" stroke="#b8b8b8"/><g fill="none" stroke="#2aa574" stroke-width="0.95"><ellipse cx="5.9" cy="9.2" rx="4.6" ry="1.7"/><ellipse cx="5.9" cy="9.2" rx="4.6" ry="1.7" transform="rotate(60 5.9 9.2)"/><ellipse cx="5.9" cy="9.2" rx="4.6" ry="1.7" transform="rotate(120 5.9 9.2)"/></g></svg>
<div class="t" style="left:682px;top:353px;letter-spacing:0.143px;">game.cfg</div>
<div class="t" style="right:781px;top:353px;">72</div>
<div class="t" style="left:1149px;top:353px;letter-spacing:-0.429px;">CFG File</div>
<div class="t" style="left:1229px;top:353px;letter-spacing:-0.182px;">31-May-2017 07:29:10 PM</div>
<div class="t" style="left:1380px;top:353px;letter-spacing:0.111px;">-rwxr-xr-x</div>
<div class="t" style="left:1460px;top:353px;letter-spacing:0.000px;">BearWooll...</div>
<svg style="left:667px;top:371px" width="13" height="16" viewBox="0 0 13 16"><path d="M0.5 0.5H8.5L11.5 3.5V15.5H0.5Z" fill="#fff" stroke="#b0b0b0"/><path d="M8.5 0.5V3.5H11.5" fill="#f0f0f0" stroke="#b8b8b8"/><g fill="none" stroke="#2aa574" stroke-width="0.95"><ellipse cx="5.9" cy="9.2" rx="4.6" ry="1.7"/><ellipse cx="5.9" cy="9.2" rx="4.6" ry="1.7" transform="rotate(60 5.9 9.2)"/><ellipse cx="5.9" cy="9.2" rx="4.6" ry="1.7" transform="rotate(120 5.9 9.2)"/></g></svg>
<div class="t" style="left:682px;top:372px;letter-spacing:0.133px;">listenserver.cfg</div>
<div class="t" style="right:781px;top:372px;">4</div>
<div class="t" style="left:1149px;top:372px;letter-spacing:-0.429px;">CFG File</div>
<div class="t" style="left:1229px;top:372px;letter-spacing:-0.136px;">31-May-2017 07:29:11 PM</div>
<div class="t" style="left:1380px;top:372px;letter-spacing:0.111px;">-rwxr-xr-x</div>
<div class="t" style="left:1460px;top:372px;letter-spacing:0.000px;">BearWooll...</div>
<svg style="left:667px;top:390px" width="13" height="16" viewBox="0 0 13 16"><path d="M0.5 0.5H9L12.5 4V15.5H0.5Z" fill="#fff" stroke="#8c8c8c"/><path d="M9 0.5V4H12.5" fill="#fff" stroke="#8c8c8c"/><g stroke="#a0a0a0" stroke-width="1"><path d="M2.5 3.5H7"/><path d="M2.5 5.5H10"/><path d="M2.5 7.5H10"/><path d="M2.5 9.5H10"/><path d="M2.5 11.5H10"/><path d="M2.5 13.5H10"/></g></svg>
<div class="t" style="left:682px;top:391px;letter-spacing:0.182px;">mapcycle.txt</div>
<div class="t" style="right:781px;top:391px;">231</div>
<div class="t" style="left:1149px;top:391px;letter-spacing:0.000px;">Text Docu...</div>
<div class="t" style="left:1229px;top:391px;letter-spacing:-0.182px;">31-May-2017 07:29:10 PM</div>
<div class="t" style="left:1380px;top:391px;letter-spacing:0.111px;">-rwxr-xr-x</div>
<div class="t" style="left:1460px;top:391px;letter-spacing:0.000px;">BearWooll...</div>
<svg style="left:667px;top:409px" width="13" height="16" viewBox="0 0 13 16"><path d="M0.5 0.5H8.5L11.5 3.5V15.5H0.5Z" fill="#fff" stroke="#b0b0b0"/><path d="M8.5 0.5V3.5H11.5" fill="#f0f0f0" stroke="#b8b8b8"/><g fill="none" stroke="#2aa574" stroke-width="0.95"><ellipse cx="5.9" cy="9.2" rx="4.6" ry="1.7"/><ellipse cx="5.9" cy="9.2" rx="4.6" ry="1.7" transform="rotate(60 5.9 9.2)"/><ellipse cx="5.9" cy="9.2" rx="4.6" ry="1.7" transform="rotate(120 5.9 9.2)"/></g></svg>
<div class="t" style="left:682px;top:410px;letter-spacing:0.600px;">mount.cfg</div>
<div class="t" style="right:781px;top:410px;">226</div>
<div class="t" style="left:1149px;top:410px;letter-spacing:-0.429px;">CFG File</div>
<div class="t" style="left:1229px;top:410px;letter-spacing:-0.318px;">05-Jun-2017 08:54:41 PM</div>
<div class="t" style="left:1380px;top:410px;letter-spacing:0.111px;">-rwxr-xr-x</div>
<div class="t" style="left:1460px;top:410px;letter-spacing:0.000px;">BearWooll...</div>
<svg style="left:667px;top:428px" width="13" height="16" viewBox="0 0 13 16"><path d="M0.5 0.5H8.5L11.5 3.5V15.5H0.5Z" fill="#fff" stroke="#b0b0b0"/><path d="M8.5 0.5V3.5H11.5" fill="#f0f0f0" stroke="#b8b8b8"/><g fill="none" stroke="#2aa574" stroke-width="0.95"><ellipse cx="5.9" cy="9.2" rx="4.6" ry="1.7"/><ellipse cx="5.9" cy="9.2" rx="4.6" ry="1.7" transform="rotate(60 5.9 9.2)"/><ellipse cx="5.9" cy="9.2" rx="4.6" ry="1.7" transform="rotate(120 5.9 9.2)"/></g></svg>
<div class="t" style="left:682px;top:429px;letter-spacing:0.400px;">network.cfg</div>
<div class="t" style="right:781px;top:429px;">43</div>
<div class="t" style="left:1149px;top:429px;letter-spacing:-0.429px;">CFG File</div>
<div class="t" style="left:1229px;top:429px;letter-spacing:-0.136px;">31-May-2017 07:29:11 PM</div>
<div class="t" style="left:1380px;top:429px;letter-spacing:0.111px;">-rwxr-xr-x</div>
<div class="t" style="left:1460px;top:429px;letter-spacing:0.000px;">BearWooll...</div>
<svg style="left:667px;top:447px" width="13" height="16" viewBox="0 0 13 16"><path d="M0.5 0.5H8.5L11.5 3.5V15.5H0.5Z" fill="#fff" stroke="#b0b0b0"/><path d="M8.5 0.5V3.5H11.5" fill="#f0f0f0" stroke="#b8b8b8"/><g fill="none" stroke="#2aa574" stroke-width="0.95"><ellipse cx="5.9" cy="9.2" rx="4.6" ry="1.7"/><ellipse cx="5.9" cy="9.2" rx="4.6" ry="1.7" transform="rotate(60 5.9 9.2)"/><ellipse cx="5.9" cy="9.2" rx="4.6" ry="1.7" transform="rotate(120 5.9 9.2)"/></g></svg>
<div class="t" style="left:682px;top:448px;letter-spacing:0.111px;">server.cfg</div>
<div class="t" style="right:781px;top:448px;">4</div>
<div class="t" style="left:1149px;top:448px;letter-spacing:-0.429px;">CFG File</div>
<div class="t" style="left:1229px;top:448px;letter-spacing:-0.136px;">31-May-2017 07:29:11 PM</div>
<div class="t" style="left:1380px;top:448px;letter-spacing:0.111px;">-rwxr-xr-x</div>
<div class="t" style="left:1460px;top:448px;letter-spacing:0.000px;">BearWooll...</div>
<svg style="left:665px;top:469px" width="16" height="12" viewBox="0 0 16 12"><rect x="0.5" y="0.5" width="15" height="11" fill="#fff" stroke="#6e6e6e"/><rect x="1" y="1" width="14" height="1.5" fill="#9a9a9a"/><rect x="2" y="3" width="3" height="8" fill="#e6e6e6"/><rect x="5" y="4" width="3" height="5" fill="#1a73d4"/><g stroke="#777"><path d="M9 4.5H13"/><path d="M9 6.5H13"/><path d="M9 8.5H12"/></g></svg>
<div class="t" style="left:682px;top:467px;letter-spacing:-0.105px;">settings_default.scr</div>
<div class="t" style="right:781px;top:467px;">126</div>
<div class="t" style="left:1149px;top:467px;letter-spacing:-0.364px;">Screen saver</div>
<div class="t" style="left:1229px;top:467px;letter-spacing:-0.182px;">31-May-2017 07:29:10 PM</div>
<div class="t" style="left:1380px;top:467px;letter-spacing:0.111px;">-rwxr-xr-x</div>
<div class="t" style="left:1460px;top:467px;letter-spacing:0.000px;">BearWooll...</div>
<svg style="left:667px;top:485px" width="13" height="16" viewBox="0 0 13 16"><path d="M0.5 0.5H8.5L11.5 3.5V15.5H0.5Z" fill="#fff" stroke="#b0b0b0"/><path d="M8.5 0.5V3.5H11.5" fill="#f0f0f0" stroke="#b8b8b8"/><g fill="none" stroke="#2aa574" stroke-width="0.95"><ellipse cx="5.9" cy="9.2" rx="4.6" ry="1.7"/><ellipse cx="5.9" cy="9.2" rx="4.6" ry="1.7" transform="rotate(60 5.9 9.2)"/><ellipse cx="5.9" cy="9.2" rx="4.6" ry="1.7" transform="rotate(120 5.9 9.2)"/></g></svg>
<div class="t" style="left:682px;top:486px;letter-spacing:0.125px;">skill.cfg</div>
<div class="t" style="right:781px;top:486px;">5,497</div>
<div class="t" style="left:1149px;top:486px;letter-spacing:-0.429px;">CFG File</div>
<div class="t" style="left:1229px;top:486px;letter-spacing:-0.136px;">31-May-2017 07:29:11 PM</div>
<div class="t" style="left:1380px;top:486px;letter-spacing:0.111px;">-rwxr-xr-x</div>
<div class="t" style="left:1460px;top:486px;letter-spacing:0.000px;">BearWooll...</div>
<svg style="left:667px;top:504px" width="13" height="16" viewBox="0 0 13 16"><path d="M0.5 0.5H8.5L11.5 3.5V15.5H0.5Z" fill="#fff" stroke="#b0b0b0"/><path d="M8.5 0.5V3.5H11.5" fill="#f0f0f0" stroke="#b8b8b8"/><g fill="none" stroke="#2aa574" stroke-width="0.95"><ellipse cx="5.9" cy="9.2" rx="4.6" ry="1.7"/><ellipse cx="5.9" cy="9.2" rx="4.6" ry="1.7" transform="rotate(60 5.9 9.2)"/><ellipse cx="5.9" cy="9.2" rx="4.6" ry="1.7" transform="rotate(120 5.9 9.2)"/></g></svg>
<div class="t" style="left:682px;top:505px;letter-spacing:0.000px;">skill_manifest.cfg</div>
<div class="t" style="right:781px;top:505px;">16</div>
<div class="t" style="left:1149px;top:505px;letter-spacing:-0.429px;">CFG File</div>
<div class="t" style="left:1229px;top:505px;letter-spacing:-0.136px;">31-May-2017 07:29:11 PM</div>
<div class="t" style="left:1380px;top:505px;letter-spacing:0.111px;">-rwxr-xr-x</div>
<div class="t" style="left:1460px;top:505px;letter-spacing:0.000px;">BearWooll...</div>
<svg style="left:666px;top:524px" width="14" height="13" viewBox="0 0 14 13"><rect x="0.5" y="0.5" width="13" height="12" fill="#f2f2f2" stroke="#333"/><circle cx="8.5" cy="3.6" r="1.1" fill="#333"/><path d="M1 8.8L4 5.8L7.5 9.2L10 7L13 8.8" stroke="#333" stroke-width="1" fill="none"/></svg>
<div class="t" style="left:682px;top:524px;letter-spacing:-0.143px;">valve.rc</div>
<div class="t" style="right:781px;top:524px;">275</div>
<div class="t" style="left:1149px;top:524px;letter-spacing:-0.333px;">Resource S...</div>
<div class="t" style="left:1229px;top:524px;letter-spacing:-0.136px;">31-May-2017 07:29:11 PM</div>
<div class="t" style="left:1380px;top:524px;letter-spacing:0.111px;">-rwxr-xr-x</div>
<div class="t" style="left:1460px;top:524px;letter-spacing:0.000px;">BearWooll...</div>
<div style="position:absolute;left:681px;top:294px;width:854px;height:19px;border:1px dotted #000;"></div>
<div style="position:absolute;left:2px;top:715px;width:651px;height:1px;background:#d7d7d7;"></div>
<div style="position:absolute;left:2px;top:716px;width:651px;height:22px;background:#f0f0f0;"></div>
<div style="position:absolute;left:652px;top:717px;width:1px;height:20px;background:#d6d6d6;"></div>
<div class="t" style="left:4px;top:720px;letter-spacing:-0.152px;">1 file and 7 directories. Total size: 174 bytes</div>
<div style="position:absolute;left:661px;top:715px;width:1257px;height:1px;background:#d7d7d7;"></div>
<div style="position:absolute;left:661px;top:716px;width:1257px;height:22px;background:#f0f0f0;"></div>
<div style="position:absolute;left:1917px;top:717px;width:1px;height:20px;background:#d6d6d6;"></div>
<div class="t" style="left:663px;top:720px;letter-spacing:-0.250px;">12 files. Total size: 7,687 bytes</div>
<div style="position:absolute;left:0px;top:744px;width:1920px;height:203px;background:#fff;border:1px solid #828790;"></div>
<div style="position:absolute;left:181px;top:746px;width:1px;height:24px;background:#e5e5e5;"></div>
<div style="position:absolute;left:241px;top:746px;width:1px;height:24px;background:#e5e5e5;"></div>
<div style="position:absolute;left:818px;top:746px;width:1px;height:24px;background:#e5e5e5;"></div>
<div style="position:absolute;left:898px;top:746px;width:1px;height:24px;background:#e5e5e5;"></div>
<div style="position:absolute;left:958px;top:746px;width:1px;height:24px;background:#e5e5e5;"></div>
<div style="position:absolute;left:1108px;top:746px;width:1px;height:24px;background:#e5e5e5;"></div>
<div class="t" style="left:7px;top:750px;letter-spacing:0.000px;">Server/Local file</div>
<div class="t" style="left:187px;top:750px;letter-spacing:0.250px;">Direction</div>
<div class="t" style="left:247px;top:750px;letter-spacing:0.200px;">Remote file</div>
<div class="t" style="right:1027px;top:750px;letter-spacing:-0.300px;">Size</div>
<div class="t" style="left:904px;top:750px;letter-spacing:0.429px;">Priority</div>
<div class="t" style="left:964px;top:750px;letter-spacing:0.000px;">Status</div>
<div style="position:absolute;left:0px;top:947px;width:1920px;height:1px;background:#b4b8be;"></div>
<div style="position:absolute;left:0px;top:948px;width:1920px;height:2px;background:#fbfbfb;"></div>
<div style="position:absolute;left:0px;top:950px;width:1920px;height:1px;background:#a8a8a8;"></div>
<div style="position:absolute;left:0px;top:951px;width:1920px;height:23px;background:linear-gradient(to bottom,#cdcdcd 0,#d6d6d6 30%,#e4e4e4 70%,#eeeeee 100%);"></div>
<div style="position:absolute;left:0px;top:974px;width:1920px;height:1px;background:#d9d9d9;"></div>
<div style="position:absolute;left:116px;top:950px;width:102px;height:21px;background:linear-gradient(to bottom,#ececec 0,#e6e6e6 45%,#dcdcdc 50%,#dcdcdc 100%);border:1px solid #a0a0a0;border-radius:0 0 2px 2px;"></div>
<div style="position:absolute;left:217px;top:950px;width:153px;height:21px;background:linear-gradient(to bottom,#ececec 0,#e6e6e6 45%,#dcdcdc 50%,#dcdcdc 100%);border:1px solid #a0a0a0;border-radius:0 0 2px 2px;"></div>
<div style="position:absolute;left:5px;top:950px;width:112px;height:21px;background:linear-gradient(to bottom,#fefefe 0,#fdfdfd 50%,#f0f0f0 85%,#e8e8e8 100%);border:1px solid #a0a0a0;border-top:none;border-radius:0 0 2px 2px;"></div>
<div class="t" style="left:13px;top:951px;letter-spacing:-0.091px;font-weight:bold;">Queued files</div>
<div class="t" style="left:123px;top:951px;letter-spacing:-0.133px;">Failed transfers</div>
<div class="t" style="left:224px;top:951px;letter-spacing:-0.208px;">Successful transfers (20)</div>
<div style="position:absolute;left:1882px;top:977px;width:1px;height:19px;background:#d7d7d7;"></div>
<div class="t" style="left:1760px;top:979px;letter-spacing:0.000px;">Queue: empty</div>
<svg style="left:1717px;top:977px" width="18" height="18"><defs><linearGradient id="lkg" x1="0" x2="1"><stop offset="0" stop-color="#ffc410"/><stop offset="0.5" stop-color="#ffc410"/><stop offset="0.5" stop-color="#eeae08"/><stop offset="1" stop-color="#e8a800"/></linearGradient></defs><path d="M4.3 8V6.2A4.6 4.6 0 0 1 13.5 6.2V8" stroke="#5c5c5c" stroke-width="1.7" fill="none"/><rect x="1" y="7" width="16" height="9.5" rx="1" fill="url(#lkg)"/><circle cx="9" cy="11.3" r="1.3" fill="#3a3f55"/><rect x="8.3" y="11.3" width="1.4" height="3" fill="#3a3f55"/></svg>
<svg style="left:1737px;top:978px" width="16" height="16"><circle cx="8" cy="8" r="7.3" fill="#fff" stroke="#4a4a4a" stroke-width="1.2"/><path d="M4.2 11.3A4.9 4.9 0 1 1 11.8 11.3" stroke="#6a6a6a" stroke-width="1.7" fill="none"/><path d="M7.6 8.4L10.4 5.6" stroke="#777" stroke-width="1.6"/></svg>
<svg style="left:1891px;top:981px" width="24" height="10"><defs><radialGradient id="gg" cx="0.4" cy="0.35" r="0.65"><stop offset="0" stop-color="#4a9a4a"/><stop offset="1" stop-color="#0a2e0a"/></radialGradient><radialGradient id="rg" cx="0.4" cy="0.35" r="0.65"><stop offset="0" stop-color="#9a3a3a"/><stop offset="1" stop-color="#300000"/></radialGradient></defs><circle cx="5" cy="5" r="4.2" fill="url(#gg)"/><circle cx="19" cy="5" r="4.2" fill="url(#rg)"/></svg>
</body></html>
